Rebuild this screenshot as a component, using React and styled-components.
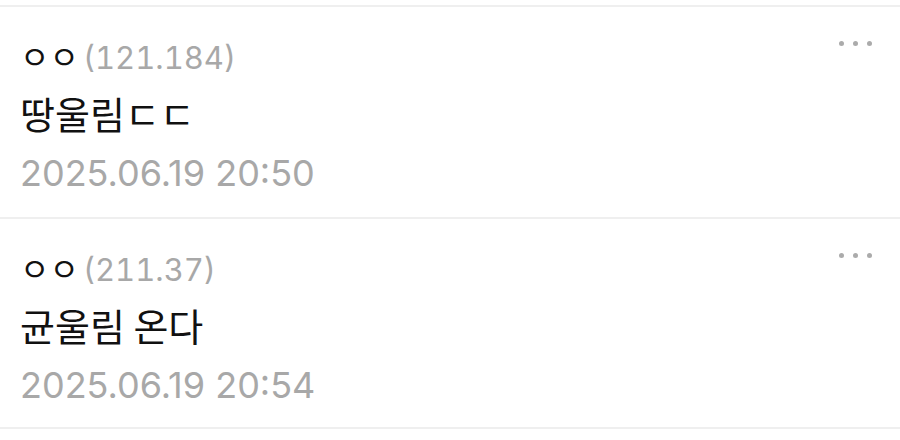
import styled, { createGlobalStyle } from "styled-components";

const GlobalStyle = createGlobalStyle`
  body {
    margin: 0;
    background: #fff;
    font-family: "Inter", "Noto Sans CJK KR", sans-serif;
  }
`;

const List = styled.ul`
  list-style: none;
  margin: 0;
  padding: 5px 0 0;
`;

const Item = styled.li`
  position: relative;
  height: 212px;
  box-sizing: border-box;
  padding: 26px 20px 0 20px;
  border-top: 2px solid #efefef;
  &:last-child {
    border-bottom: 2px solid #efefef;
  }
`;

const NameRow = styled.div`
  display: flex;
  align-items: baseline;
  gap: 4px;
  height: 44px;
  line-height: 44px;
`;

const Nick = styled.span`
  font-size: 32px;
  color: #111;
  font-family: "Noto Sans CJK KR", sans-serif;
`;

const Ip = styled.span`
  font-size: 31px;
  color: #a8a8a8;
  font-variant-numeric: tabular-nums;
`;

const Body = styled.div`
  margin-top: 8px;
  font-size: 38px;
  line-height: 56px;
  color: #111;
  font-family: "Noto Sans CJK KR", sans-serif;
`;

const Date = styled.div`
  margin-top: 4px;
  font-size: 36px;
  line-height: 56px;
  color: #a8a8a8;
`;

const More = styled.button`
  position: absolute;
  top: 34px;
  right: 28px;
  display: flex;
  gap: 9px;
  padding: 0;
  border: none;
  background: none;
  span {
    width: 5px;
    height: 5px;
    border-radius: 50%;
    background: #ababab;
  }
`;

const comments = [
  { nick: "ㅇㅇ", ip: "(121.184)", text: "땅울림ㄷㄷ", date: "2025.06.19 20:50" },
  { nick: "ㅇㅇ", ip: "(211.37)", text: "균울림 온다", date: "2025.06.19 20:54" },
];

export default function App() {
  return (
    <>
      <GlobalStyle />
      <List>
        {comments.map((c, i) => (
          <Item key={i}>
            <NameRow>
              <Nick>{c.nick}</Nick>
              <Ip>{c.ip}</Ip>
            </NameRow>
            <Body>{c.text}</Body>
            <Date>{c.date}</Date>
            <More aria-label="더보기">
              <span />
              <span />
              <span />
            </More>
          </Item>
        ))}
      </List>
    </>
  );
}
